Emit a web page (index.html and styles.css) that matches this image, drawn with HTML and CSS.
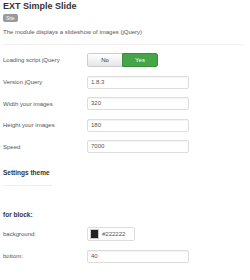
FILE: index.html
```html
<!DOCTYPE html>
<html lang="en">

<head>
    <meta charset="UTF-8">
    <title>EXT Simple Slide</title>
    <link rel="stylesheet" href="styles.css">
</head>

<body>
    <!-- Module header -->
    <div class="module-head">
        <h1>EXT Simple Slide</h1>
        <span class="badge">Site</span>
        <p class="desc">The module displays a slideshow of images (jQuery)</p>
    </div>

    <!-- Basic options -->
    <div class="options">
        <div class="control-group">
            <label>Loading script jQuery</label>
            <div class="toggle">
                <span class="toggle-btn">No</span>
                <span class="toggle-btn active">Yes</span>
            </div>
        </div>
        <div class="control-group">
            <label>Version jQuery</label>
            <div class="field">1.8.3</div>
        </div>
        <div class="control-group">
            <label>Width your images</label>
            <div class="field">320</div>
        </div>
        <div class="control-group">
            <label>Height your images</label>
            <div class="field">180</div>
        </div>
        <div class="control-group">
            <label>Speed</label>
            <div class="field">7000</div>
        </div>
    </div>

    <!-- Theme settings -->
    <h3 class="section-title">Settings theme</h3>
    <h4 class="sub-title">for block:</h4>

    <div class="options">
        <div class="control-group">
            <label>background:</label>
            <div class="color-field">
                <span class="swatch"></span>
                <span>#222222</span>
            </div>
        </div>
        <div class="control-group">
            <label>bottom:</label>
            <div class="field">40</div>
        </div>
    </div>
</body>

</html>
```

FILE: styles.css
```css
/* General body styles */
body {
    font-family: "Liberation Sans", Arial, sans-serif;
    font-size: 6px;
    color: #333;
    margin: 0;
    padding: 0 3px;
    background: #fff;
}

/* Header */
.module-head {
    border-bottom: 1px solid #f0f0f0;
    padding-bottom: 8px;
    margin-right: 3px;
}

h1 {
    font-size: 9px;
    line-height: 12px;
    margin: 0;
    color: #333;
}

.badge {
    display: inline-block;
    margin-top: 2px;
    height: 8px;
    line-height: 8px;
    padding: 0 3px;
    font-size: 5px;
    color: #fff;
    background-color: #999;
    border-radius: 2px;
}

.desc {
    margin: 6px 0 0;
    line-height: 8px;
    color: #555;
}

/* Form rows */
.options {
    margin-top: 8px;
}

.control-group {
    display: flex;
    align-items: center;
    height: 13px;
    margin-bottom: 8.5px;
}

.control-group:first-child {
    height: 14px;
}

.control-group label {
    width: 84px;
    color: #555;
}

.field {
    box-sizing: border-box;
    width: 102px;
    height: 13px;
    line-height: 11px;
    padding: 0 3px;
    border: 1px solid #ddd;
    border-radius: 2px;
    color: #555;
    box-shadow: inset 0 1px 1px rgba(0, 0, 0, 0.05);
}

/* Yes / No switch */
.toggle {
    display: flex;
    width: 71px;
    height: 14px;
    border-radius: 2px;
    overflow: hidden;
}

.toggle-btn {
    flex: 1;
    text-align: center;
    line-height: 12px;
    border: 1px solid #ccc;
    background: linear-gradient(#fff, #e6e6e6);
    color: #333;
}

.toggle-btn:first-child {
    border-right: none;
    border-radius: 2px 0 0 2px;
}

.toggle-btn.active {
    background: #46a546;
    border-color: #3d8b3d;
    color: #fff;
    border-radius: 0 2px 2px 0;
}

/* Section titles */
.section-title {
    font-size: 6.5px;
    line-height: 9px;
    margin: 15px 0 0;
    padding-bottom: 8px;
    width: 49px;
    white-space: nowrap;
    color: #333;
    border-bottom: 1px solid #eee;
}

.sub-title {
    font-size: 6.5px;
    line-height: 9px;
    margin: 24px 0 0;
    color: #333;
}

/* Colour picker */
.color-field {
    box-sizing: border-box;
    display: flex;
    align-items: center;
    gap: 3px;
    width: 48px;
    height: 14px;
    padding: 0 2px;
    border: 1px solid #ddd;
    border-radius: 2px;
    color: #555;
}

.swatch {
    width: 9px;
    height: 10px;
    background-color: #222;
    border: 1px solid #ccc;
    box-sizing: border-box;
}
```
